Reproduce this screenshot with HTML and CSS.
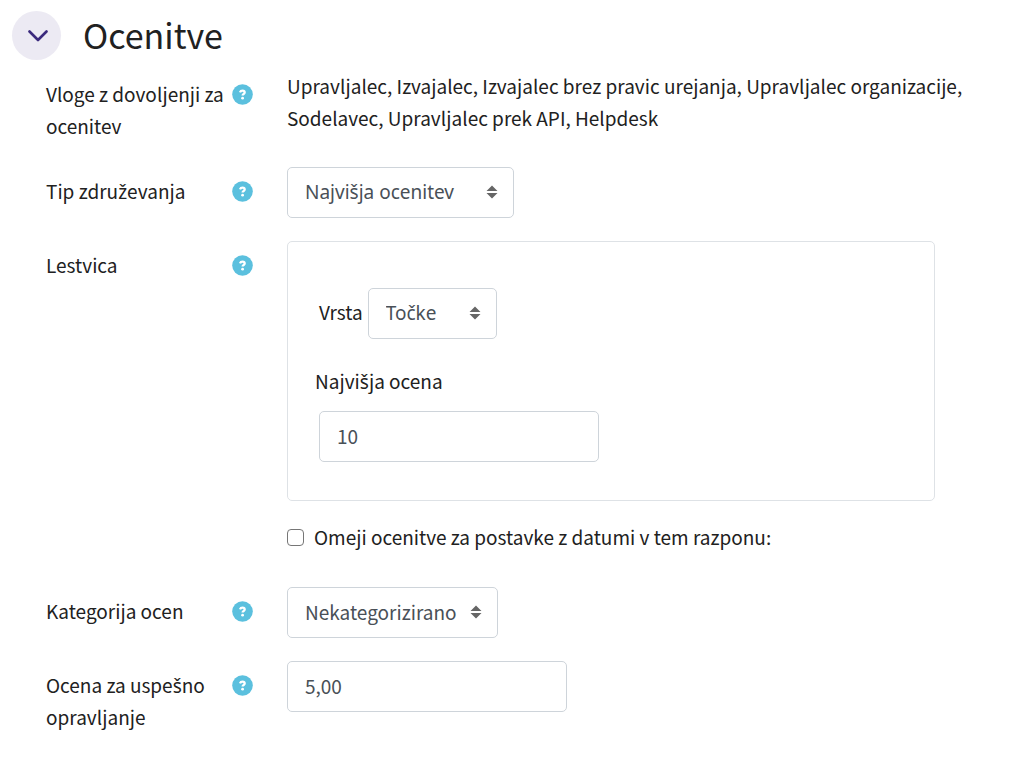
FILE: index.html
```html
<!DOCTYPE html>
<html lang="sl">
<head>
<meta charset="utf-8">
<title>Ocenitve</title>
<link rel="stylesheet" href="styles.css">
</head>
<body>
<svg class="sprite" aria-hidden="true">
  <symbol id="help" viewBox="0 0 21 21">
    <circle cx="10.500" cy="10.500" r="10.300" fill="#5bc0de"/>
    <path d="M8 8.300C8.400 7.200 9.300 6.600 10.500 6.600c1.300 0 2.200 .7 2.200 1.800 0 1.600-2.100 1.500-2.100 3.100" fill="none" stroke="#fff" stroke-width="2.300"/>
    <circle cx="10.600" cy="14.200" r="1.400" fill="#fff"/>
  </symbol>
  <symbol id="sort" viewBox="0 0 12 14">
    <path d="M6 .5L11.500 6H.5zM6 13.500L11.500 8H.5z" fill="#666"/>
  </symbol>
</svg>
<form class="section">
  <header class="section-head">
    <button class="toggle" type="button" aria-label="Skrči Ocenitve" aria-expanded="true">
      <svg width="22" height="14" viewBox="0 0 22 14"><path d="M3.500 2.500l8.500 8.500 8.500-8.500" fill="none" stroke="#3b2a7d" stroke-width="2.600" stroke-linecap="round" stroke-linejoin="round"/></svg>
    </button>
    <h1 class="title">Ocenitve</h1>
  </header>

  <div class="rows">
    <div class="row">
      <div class="label"><span>Vloge z dovoljenji za ocenitev</span><button class="help" type="button" aria-label="Pomoč"><svg><use href="#help"/></svg></button></div>
      <div class="value">Upravljalec, Izvajalec, Izvajalec brez pravic urejanja, Upravljalec organizacije, Sodelavec, Upravljalec prek API, Helpdesk</div>
    </div>

    <div class="row">
      <div class="label"><label for="aggregate">Tip zdru<span class="accented">ž</span>evanja</label><button class="help" type="button" aria-label="Pomoč"><svg><use href="#help"/></svg></button></div>
      <div class="value"><span class="pick pick-wide"><select id="aggregate" class="control control-accented"><option>Najvišja ocenitev</option></select><svg class="arrows"><use href="#sort"/></svg></span></div>
    </div>

    <div class="row">
      <div class="label"><span>Lestvica</span><button class="help" type="button" aria-label="Pomoč"><svg><use href="#help"/></svg></button></div>
      <div class="value">
        <div class="scale">
          <div class="scale-type">
            <label class="type-label" for="type">Vrsta</label>
            <span class="pick pick-small"><select id="type" class="control control-accented"><option>Točke</option></select><svg class="arrows"><use href="#sort"/></svg></span>
          </div>
          <label class="scale-label" for="max">Najvi<span class="accented">š</span>ja ocena</label>
          <div class="scale-max"><input id="max" class="control text" type="text" value="10"></div>
        </div>
        <label class="limit"><input class="check" type="checkbox">Omeji ocenitve za postavke z datumi v tem razponu:</label>
      </div>
    </div>

    <div class="row">
      <div class="label"><label for="category">Kategorija ocen</label><button class="help" type="button" aria-label="Pomoč"><svg><use href="#help"/></svg></button></div>
      <div class="value"><span class="pick pick-mid"><select id="category" class="control"><option>Nekategorizirano</option></select><svg class="arrows"><use href="#sort"/></svg></span></div>
    </div>

    <div class="row">
      <div class="label"><label for="pass">Ocena za uspe<span class="accented">š</span>no opravljanje</label><button class="help" type="button" aria-label="Pomoč"><svg><use href="#help"/></svg></button></div>
      <div class="value"><input id="pass" class="control text" type="text" value="5,00"></div>
    </div>
  </div>
</form>
</body>
</html>
```
FILE: styles.css
```css
* { box-sizing: border-box; }
body {
  margin: 0;
  background: #fff;
  color: #212121;
  font-family: "Source Sans Pro", "Noto Sans CJK SC", "Noto Sans", sans-serif;
  font-size: 19px;
  line-height: 32px;
}
.sprite { position: absolute; width: 0; height: 0; }
.section { padding: 11px 12px; }
.section-head { display: flex; align-items: center; gap: 22px; }
.toggle {
  display: grid;
  place-items: center;
  width: 49px;
  height: 49px;
  padding: 0;
  border: 0;
  border-radius: 50%;
  background: #eceaf3;
}
.title { margin: 0; padding-bottom: 2px; font-size: 34px; font-weight: 400; line-height: 46px; }
.rows { display: grid; gap: 23px; padding: 10px 24px 0 34px; }
.row { display: grid; grid-template-columns: 207px minmax(0, 1fr); column-gap: 34px; }
.label {
  display: flex;
  justify-content: space-between;
  align-items: flex-start;
  padding: 8px 0 2px;
}
.label > :first-child { flex: 0 1 184px; }
.help { flex: none; display: block; margin: 6px 0 0; padding: 0; border: 0; background: none; }
.help svg { display: block; width: 21px; height: 21px; }
.control {
  display: block;
  width: 100%;
  height: 51px;
  margin: 0;
  padding: 0 17px 2px;
  border: 1px solid #ced4da;
  border-radius: 5px;
  background: #fff;
  color: #495057;
  font: inherit;
  appearance: none;
}
/* Noto Sans carries the precomposed caron letters */
.accented { font-family: "Source Sans Pro", "Noto Sans", sans-serif; line-height: 1; }
.control-accented { padding-bottom: 1px; font-family: "Source Sans Pro", "Noto Sans", sans-serif; }
.text { max-width: 280px; }
.pick { position: relative; display: block; }
.pick-wide { width: 227px; }
.pick-mid { width: 211px; }
.pick-small { width: 129px; }
.arrows { position: absolute; right: 16px; top: 18px; width: 12px; height: 14px; pointer-events: none; }
.scale {
  max-width: 648px;
  padding: 46px 27px 38px;
  border: 1px solid #dee2e6;
  border-radius: 5px;
}
.scale-type { display: flex; align-items: center; gap: 5px; padding-left: 4px; }
.type-label { padding-bottom: 4px; }
.scale-label { display: block; margin: 26px 0 14px; }
.scale-max { padding-left: 4px; }
.limit { display: flex; align-items: center; gap: 10px; margin: 20px 0 11px; }
.check {
  width: 17px;
  height: 17px;
  margin: 0;
  border: 1px solid #767676;
  border-radius: 4px;
  background: #fff;
  appearance: none;
}
.check:checked { background: #3b2a7d; }
```
